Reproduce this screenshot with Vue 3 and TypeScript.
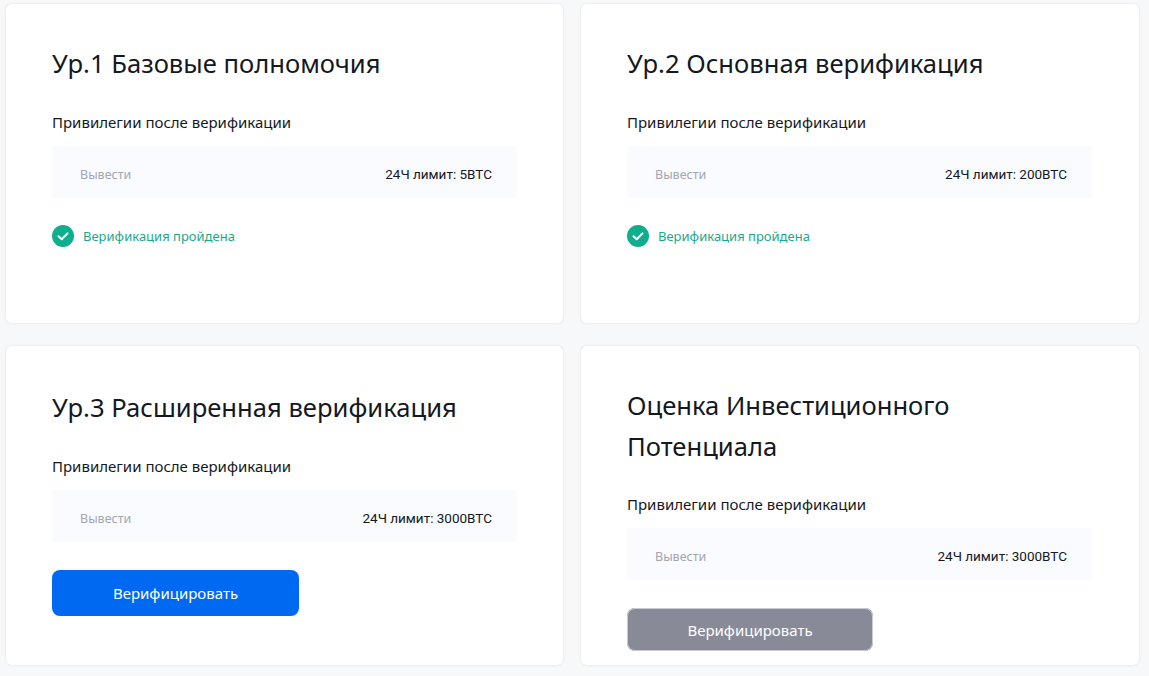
<script setup lang="ts">
interface Level {
  title: string
  limit: string
  done: boolean
  kind?: string
}

const levels: Level[] = [
  { title: 'Ур.1 Базовые полномочия', limit: '24Ч лимит: 5BTC', done: true },
  { title: 'Ур.2 Основная верификация', limit: '24Ч лимит: 200BTC', done: true },
  { title: 'Ур.3 Расширенная верификация', limit: '24Ч лимит: 3000BTC', done: false, kind: 'advanced' },
  { title: 'Оценка Инвестиционного Потенциала', limit: '24Ч лимит: 3000BTC', done: false, kind: 'invest' },
]
</script>

<template>
  <div class="page">
    <section v-for="level in levels" :key="level.title" class="card" :class="level.kind">
      <h2 class="title">{{ level.title }}</h2>
      <p class="sub">Привилегии после верификации</p>
      <div class="row">
        <span class="label">Вывести</span>
        <span class="limit">{{ level.limit }}</span>
      </div>
      <div v-if="level.done" class="passed">
        <svg width="22" height="22" viewBox="0 0 22 22">
          <circle cx="11" cy="11" r="11" fill="#0fae8c" />
          <path d="M6.5 11.2l3.2 3 5.8-5.8" fill="none" stroke="#fff" stroke-width="2" stroke-linecap="round" stroke-linejoin="round" />
        </svg>
        <span>Верификация пройдена</span>
      </div>
      <button v-else class="btn">Верифицировать</button>
    </section>
  </div>
</template>

<style>
body {
  background: #f7f8fa;
}
</style>

<style scoped>
.page {
  display: grid;
  grid-template-columns: 557px 558px;
  grid-auto-rows: 319px;
  column-gap: 18px;
  row-gap: 23px;
  padding: 4px 0 0 6px;
  font-family: "Noto Sans", sans-serif;
  height: 672px;
  overflow: hidden;
}
.card {
  background: #fff;
  border-radius: 6px;
  box-shadow: 0 0 3px rgba(20, 30, 60, 0.1);
  padding: 40px 46px 0;
  box-sizing: border-box;
  overflow: hidden;
}
.card.advanced {
  padding-top: 42px;
}
.card.invest {
  padding-top: 39px;
}
.title {
  margin: 0;
  font-size: 25.6px;
  font-weight: 400;
  line-height: 40px;
  color: #14181f;
  width: 440px;
}
.invest .title {
  line-height: 41px;
  margin-bottom: -1px;
}
.sub {
  margin: 28px 0 0;
  font-size: 15px;
  line-height: 20px;
  color: #14181f;
}
.row {
  display: flex;
  justify-content: space-between;
  align-items: center;
  width: 465px;
  height: 52px;
  box-sizing: border-box;
  margin-top: 14px;
  padding: 4px 25px 0 28px;
  background: #fafbfe;
  font-size: 12.5px;
}
.label {
  color: #a3a6b1;
}
.limit {
  color: #14181f;
  font-family: Roboto, sans-serif;
  font-size: 13.5px;
}
.passed {
  display: flex;
  align-items: center;
  gap: 9px;
  margin-top: 27px;
  font-size: 13px;
  color: #1ba78c;
}
.btn {
  display: block;
  width: 247px;
  height: 46px;
  margin-top: 28px;
  border: 0;
  border-radius: 8px;
  background: #0069f2;
  color: #fff;
  font: 15px "Noto Sans", sans-serif;
}
.invest .btn {
  background: #888a98;
  height: 43px;
  width: 246px;
  outline: 1px solid #c9cad2;
  outline-offset: -1px;
}
</style>
